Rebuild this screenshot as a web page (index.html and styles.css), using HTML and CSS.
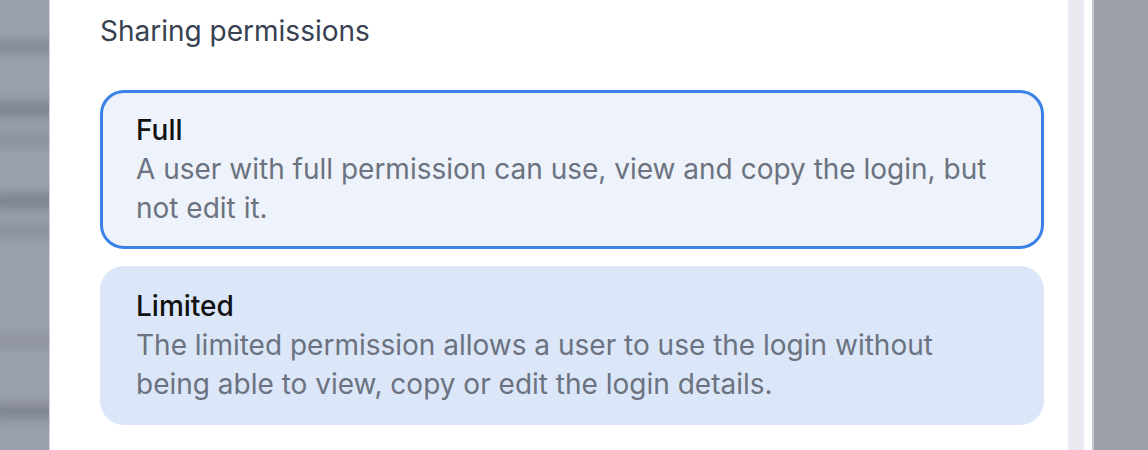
FILE: index.html
```html
<!DOCTYPE html>
<html lang="en">
<head>
<meta charset="utf-8">
<title>Sharing permissions</title>
<link rel="stylesheet" href="styles.css">
</head>
<body>
<div class="page">
  <div class="backdrop-left">
    <div class="blur-layer">
      <div class="bar b1"></div>
      <div class="bar b2"></div>
      <div class="bar b3"></div>
      <div class="bar b4"></div>
      <div class="bar b5"></div>
      <div class="bar b6"></div>
      <div class="bar b7"></div>
    </div>
  </div>
  <div class="modal">
    <div class="content">
      <h2 class="heading">Sharing permissions</h2>
      <div class="options">
        <div class="option selected">
          <div class="option-title">Full</div>
          <div class="option-desc">A user with full permission can use, view and copy the login, but not edit it.</div>
        </div>
        <div class="option">
          <div class="option-title">Limited</div>
          <div class="option-desc">The limited permission allows a user to use the login without being able to view, copy or edit the login details.</div>
        </div>
      </div>
    </div>
    <div class="track"></div>
    <div class="gutter"></div>
  </div>
  <div class="backdrop-right"></div>
</div>
</body>
</html>
```

FILE: styles.css
```css
* { box-sizing: border-box; }

html, body {
  margin: 0;
  padding: 0;
  width: 1148px;
  height: 450px;
  overflow: hidden;
  background: #9aa0a9;
  font-family: Inter, "Noto Sans", "Liberation Sans", sans-serif;
}

.page {
  display: flex;
  width: 1148px;
  height: 450px;
}

.backdrop-left {
  width: 50px;
  flex: none;
  background: #9ba1ac;
  overflow: hidden;
  border-right: 1px solid #cfd2d7;
}

.blur-layer {
  display: flex;
  flex-direction: column;
  filter: blur(6px);
  padding-top: 40px;
  margin-left: -10px;
}

.bar {
  width: 80px;
  height: 14px;
  background: #7a808b;
}
.b1 { margin-bottom: 48px; opacity: .7; }
.b2 { margin-bottom: 16px; }
.b3 { margin-bottom: 48px; opacity: .5; }
.b4 { margin-bottom: 16px; }
.b5 { margin-bottom: 96px; opacity: .5; }
.b6 { margin-bottom: 56px; opacity: .4; }
.b7 { opacity: .9; }

.modal {
  flex: 1;
  display: flex;
  background: #ffffff;
}

.content {
  flex: 1;
  padding: 13px 24px 0 50px;
}

.heading {
  margin: 0 0 41px;
  font-size: 28px;
  line-height: 36px;
  font-weight: 400;
  color: #374151;
}

.options {
  display: flex;
  flex-direction: column;
  gap: 17px;
}

.option {
  border: 3px solid transparent;
  border-radius: 24px;
  background: #dbe6f8;
  padding: 17px 33px 18px;
}

.option.selected {
  border-color: #3b82e6;
  background: #eef2fb;
}

.option-title {
  font-size: 28px;
  line-height: 40px;
  font-weight: 500;
  color: #111111;
}

.option-desc {
  font-size: 28px;
  line-height: 39px;
  color: #6b7280;
}

.track {
  width: 16px;
  flex: none;
  background: #e9eaef;
}

.gutter {
  width: 8px;
  flex: none;
  background: #ffffff;
}

.backdrop-right {
  width: 56px;
  flex: none;
  background: #9a9fa8;
  border-left: 2px solid #c4c7cd;
}
```
